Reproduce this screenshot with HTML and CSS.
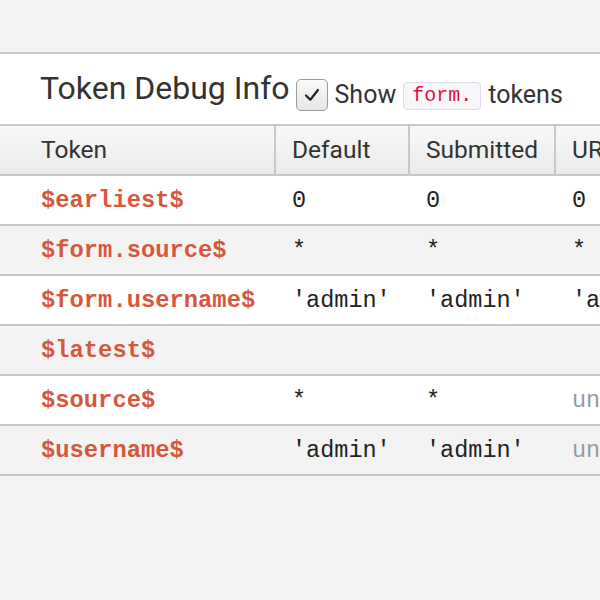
FILE: index.html
```html
<!DOCTYPE html>
<html>
<head>
<meta charset="utf-8">
<link rel="stylesheet" href="styles.css">
</head>
<body>
<div class="panel">
  <div class="title-bar">
    <h2 class="title">Token Debug Info</h2>
    <label class="toggle">
      <span class="checkbox"><svg width="22" height="22" viewBox="0 0 22 22"><path d="M5 11.5 L9.3 15.8 L17 6" fill="none" stroke="#222" stroke-width="2.2" stroke-linecap="round" stroke-linejoin="round"/></svg></span>
      <span class="show">Show</span>
      <code class="code">form.</code>
      <span class="show">tokens</span>
    </label>
  </div>
  <table class="tokens">
    <thead>
      <tr><th class="c1">Token</th><th class="c2">Default</th><th class="c3">Submitted</th><th class="c4">URL</th></tr>
    </thead>
    <tbody>
      <tr><td class="name">$earliest$</td><td>0</td><td>0</td><td>0</td></tr>
      <tr class="alt"><td class="name">$form.source$</td><td>*</td><td>*</td><td>*</td></tr>
      <tr><td class="name">$form.username$</td><td>'admin'</td><td>'admin'</td><td>'admin'</td></tr>
      <tr class="alt"><td class="name">$latest$</td><td></td><td></td><td></td></tr>
      <tr><td class="name">$source$</td><td>*</td><td>*</td><td class="undef">undefined</td></tr>
      <tr class="alt"><td class="name">$username$</td><td>'admin'</td><td>'admin'</td><td class="undef">undefined</td></tr>
    </tbody>
  </table>
</div>
</body>
</html>
```

FILE: styles.css
```css
html, body {
  margin: 0;
  padding: 0;
  background: #f3f3f3;
  overflow: hidden;
}
body {
  padding-top: 52px;
  font-family: Roboto, "Liberation Sans", sans-serif;
  color: #333;
}
.panel {
  border-top: 2px solid #c8c8c8;
}
.title-bar {
  background: #fff;
  height: 70px;
  display: flex;
  align-items: center;
  padding-left: 40px;
}
.title {
  margin: 0;
  font-size: 32px;
  font-weight: 400;
  color: #333;
  margin-top: -2px;
}
.toggle {
  display: flex;
  align-items: center;
  margin-left: 6px;
  font-size: 25px;
  margin-top: 10px;
}
.checkbox {
  width: 30px;
  height: 30px;
  border: 1px solid #9a9a9a;
  border-radius: 5px;
  background: linear-gradient(#fafafa, #e6e6e6);
  display: flex;
  align-items: center;
  justify-content: center;
  margin-top: 1px;
}
.show {
  margin-left: 7px;
}
.code {
  margin-left: 7px;
  font-family: "Liberation Mono", monospace;
  font-size: 20px;
  color: #dd1144;
  background: #f7f7f9;
  border: 1px solid #dcdce3;
  border-radius: 4px;
  padding: 0 8px;
  height: 26px;
  line-height: 26px;
  margin-top: 3px;
}
.tokens {
  border-collapse: collapse;
  table-layout: fixed;
  width: 700px;
}
.tokens th {
  height: 46px;
  padding: 0 0 2px 16px;
  text-align: left;
  font-weight: 400;
  font-size: 24.5px;
  color: #333;
  background: linear-gradient(#f8f8f8, #ebebeb);
  border-top: 2px solid #c8c8c8;
  border-bottom: 2px solid #c8c8c8;
  border-left: 2px solid #c8c8c8;
  white-space: nowrap;
}
.tokens th.c1 { width: 233px; padding-left: 41px; border-left: none; }
.tokens th.c2 { width: 116px; }
.tokens th.c3 { width: 128px; }
.tokens th.c4 { width: 150px; }
.tokens td {
  height: 48px;
  padding: 0 0 0 17px;
  font-family: "Liberation Mono", monospace;
  font-size: 23.5px;
  color: #222;
  background: #fff;
  border-bottom: 2px solid #c8c8c8;
  white-space: nowrap;
  overflow: hidden;
}
.tokens tr.alt td {
  background: #f3f3f3;
}
.tokens td.name {
  padding-left: 41px;
  color: #d6573b;
  font-weight: 700;
  font-size: 23.8px;
}
.tokens td.undef {
  color: #999;
}
```
